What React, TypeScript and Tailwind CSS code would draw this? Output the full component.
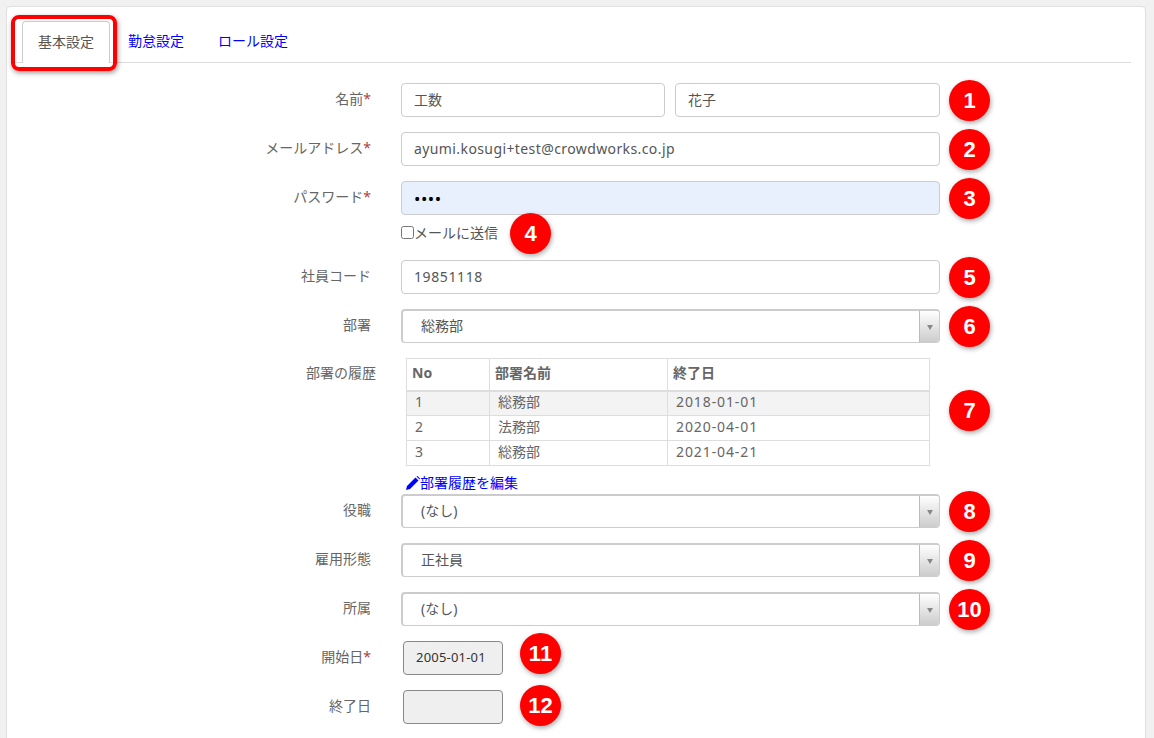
const font = "font-['Noto_Sans','Noto_Sans_CJK_JP',sans-serif]";

function Badge({ n, className = "" }: { n: number; className?: string }) {
  return (
    <div
      className={`w-[41px] h-[41px] shrink-0 rounded-full bg-[#ff0000] text-white flex items-center justify-center text-[22px] font-bold font-['Liberation_Sans',sans-serif] shadow-[1px_2px_5px_rgba(0,0,0,0.35)] ${className}`}
    >
      {n}
    </div>
  );
}

function Label({ text, required, className = "" }: { text: string; required?: boolean; className?: string }) {
  return (
    <div className={`w-[357px] shrink-0 text-right text-sm text-[#666] ${className}`}>
      {text}
      {required && <span className="text-[#a94442]">*</span>}
    </div>
  );
}

function TextInput({ value, className = "" }: { value: string; className?: string }) {
  return (
    <input
      readOnly
      value={value}
      className={`h-[34px] px-3 pb-[2px] text-sm text-[#555] bg-white border border-[#ccc] rounded outline-none ${className}`}
    />
  );
}

function Select({ value }: { value: string }) {
  return (
    <div className="w-[539px] h-[34px] flex bg-white border border-[#ccc] border-t-2 border-l-2 rounded overflow-hidden">
      <div className="flex-1 pl-[18px] text-sm leading-[29px] text-[#555]">{value}</div>
      <div className="w-[20px] flex items-center justify-center border-l border-[#bbb] bg-gradient-to-b from-white to-[#ccc]">
        <div className="w-0 h-0 mt-[2px] border-x-[3px] border-x-transparent border-t-[5px] border-t-[#888]" />
      </div>
    </div>
  );
}

const history = [
  { no: 1, name: "総務部", end: "2018-01-01" },
  { no: 2, name: "法務部", end: "2020-04-01" },
  { no: 3, name: "総務部", end: "2021-04-21" },
];

export default function App() {
  return (
    <div className={`h-[738px] overflow-hidden bg-[#f1f1f1] pt-[6px] pl-[6px] pr-[8px] ${font}`}>
      <div className="h-[760px] bg-white border border-[#e0e0e0] rounded-t pl-[7px] pr-[14px] pt-[14px] relative">
        {/* Tabs */}
        <div className="h-[42px] flex pl-[8px] border-b border-[#ddd] text-sm">
          <div className="w-[88px] h-[42px] pb-[2px] flex items-center justify-center bg-white border border-[#ccc] border-b-0 rounded-t text-[#555]">
            基本設定
          </div>
          <div className="w-[88px] ml-[2px] h-[41px] pb-[2px] flex items-center justify-center text-[#0000ff]">勤怠設定</div>
          <div className="w-[102px] ml-[2px] h-[41px] pb-[2px] flex items-center justify-center text-[#0000ff]">ロール設定</div>
        </div>
        {/* red highlight around the active tab */}
        <div className="absolute left-[4px] top-[8px] w-[106px] h-[56px] border-4 border-[#ff0000] rounded-lg shadow-[1px_2px_5px_rgba(0,0,0,0.4)]" />

        {/* Form */}
        <div className="flex flex-col mt-[20px]">
          <div className="flex items-center h-[34px]">
            <Label text="名前" required className="-mt-[3px]" />
            <div className="flex gap-[10px] ml-[30px]">
              <TextInput value="工数" className="w-[264px]" />
              <TextInput value="花子" className="w-[265px]" />
            </div>
            <Badge n={1} className="ml-[9px]" />
          </div>

          <div className="flex items-center h-[34px] mt-[15px]">
            <Label text="メールアドレス" required className="-mt-[3px]" />
            <TextInput value="ayumi.kosugi+test@crowdworks.co.jp" className="w-[539px] ml-[30px] tracking-[0.4px]" />
            <Badge n={2} className="ml-[9px]" />
          </div>

          <div className="flex items-center h-[34px] mt-[15px]">
            <Label text="パスワード" required className="-mt-[3px]" />
            <input
              readOnly
              type="password"
              value="test"
              className="w-[539px] ml-[30px] h-[34px] px-3 text-[17px] text-black tracking-[0.5px] bg-[#e8f0fe] border border-[#ccc] rounded outline-none"
            />
            <Badge n={3} className="ml-[9px]" />
          </div>

          <div className="flex items-center h-[45px] pb-[9px] pl-[387px] text-sm text-[#555]">
            <input type="checkbox" className="w-[13px] h-[13px] m-0 -mt-[2px]" />
            <span>メールに送信</span>
            <Badge n={4} className="ml-[12px] mt-[1px]" />
          </div>

          <div className="flex items-center h-[34px]">
            <Label text="社員コード" className="-mt-[3px]" />
            <TextInput value="19851118" className="w-[539px] ml-[30px] tracking-[0.6px]" />
            <Badge n={5} className="ml-[9px]" />
          </div>

          <div className="flex items-center h-[34px] mt-[15px]">
            <Label text="部署" className="-mt-[3px]" />
            <div className="ml-[30px]">
              <Select value="総務部" />
            </div>
            <Badge n={6} className="ml-[9px]" />
          </div>

          <div className="flex items-start mt-[15px]">
            <div className="w-[362px] shrink-0 text-right text-sm text-[#666] pt-[5px]">部署の履歴</div>
            <div className="ml-[30px]">
              <table className="w-[524px] table-fixed border-collapse text-sm text-[#666]">
                <thead>
                  <tr className="h-[32px] border-b-2 border-[#ddd]">
                    <th className="w-[83px] border border-[#ddd] border-b-2 text-left font-bold pl-[5px] pb-[2px]">No</th>
                    <th className="w-[178px] border border-[#ddd] border-b-2 text-left font-bold pl-[5px] pb-[2px]">部署名前</th>
                    <th className="border border-[#ddd] border-b-2 text-left font-bold pl-[5px] pb-[2px]">終了日</th>
                  </tr>
                </thead>
                <tbody>
                  {history.map((row, i) => (
                    <tr key={row.no} className={`h-[25px] ${i === 0 ? "bg-[#f3f3f3]" : "bg-white"}`}>
                      <td className="border border-[#ddd] pl-[8px] py-0 pb-[2px]">{row.no}</td>
                      <td className="border border-[#ddd] pl-[8px] py-0 pb-[2px]">{row.name}</td>
                      <td className="border border-[#ddd] pl-[8px] py-0 pb-[2px] tracking-[0.9px]">{row.end}</td>
                    </tr>
                  ))}
                </tbody>
              </table>
              <div className="h-[28px] flex items-center pt-[6px] text-sm text-[#0000ff]">
                <svg viewBox="0 0 14 14" className="w-[14px] h-[14px] shrink-0 fill-[#0000ff]">
                  <path d="M0 14l1-4L9.5 1.5l3 3L4 13z" />
                  <path d="M10.5.5l1-.5 2.5 2.5-.5 1z" />
                </svg>
                <span>部署履歴を編集</span>
              </div>
            </div>
            <Badge n={7} className="ml-[19px] mt-[32px]" />
          </div>

          <div className="flex items-center h-[34px]">
            <Label text="役職" className="-mt-[3px]" />
            <div className="ml-[30px]">
              <Select value="(なし)" />
            </div>
            <Badge n={8} className="ml-[9px]" />
          </div>

          <div className="flex items-center h-[34px] mt-[15px]">
            <Label text="雇用形態" className="-mt-[3px]" />
            <div className="ml-[30px]">
              <Select value="正社員" />
            </div>
            <Badge n={9} className="ml-[9px]" />
          </div>

          <div className="flex items-center h-[34px] mt-[15px]">
            <Label text="所属" className="-mt-[3px]" />
            <div className="ml-[30px]">
              <Select value="(なし)" />
            </div>
            <Badge n={10} className="ml-[9px]" />
          </div>

          <div className="flex items-center h-[34px] mt-[15px]">
            <Label text="開始日" required className="-mt-[2px]" />
            <div className="w-[100px] h-[34px] ml-[32px] flex items-center pl-[12px] pb-[1px] text-[13px] tracking-[0.2px] text-[#333] bg-[#efefef] border border-[#888] rounded">
              2005-01-01
            </div>
            <Badge n={11} className="ml-[17px] -mt-[10px]" />
          </div>

          <div className="flex items-center h-[34px] mt-[15px]">
            <Label text="終了日" className="-mt-[2px]" />
            <div className="w-[100px] h-[34px] ml-[32px] bg-[#efefef] border border-[#888] rounded" />
            <Badge n={12} className="ml-[17px] -mt-[4px]" />
          </div>
        </div>
      </div>
    </div>
  );
}
